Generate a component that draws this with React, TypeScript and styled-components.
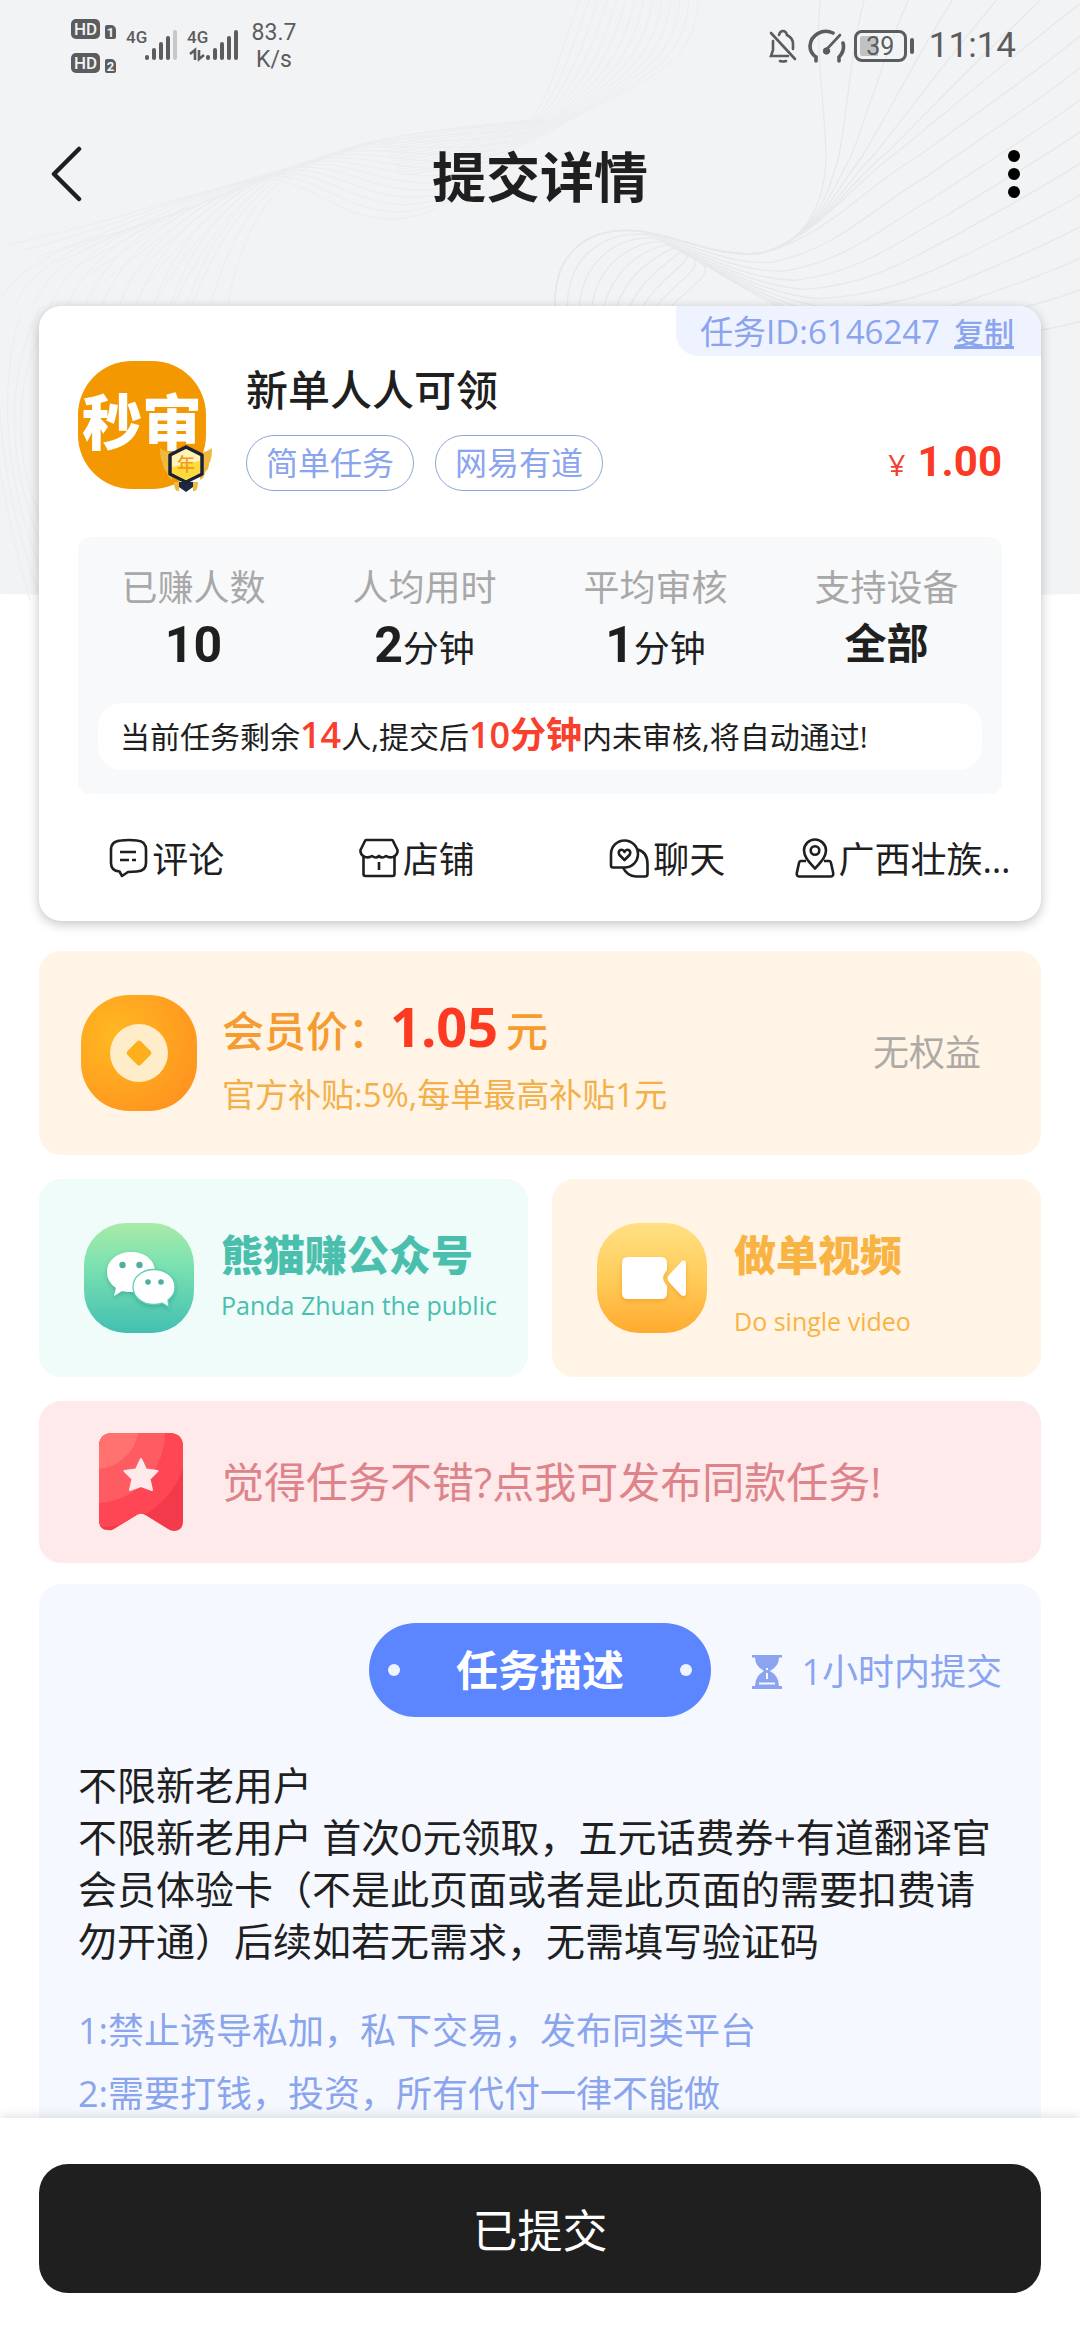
import React from "react";
import styled, { createGlobalStyle } from "styled-components";

const GlobalStyle = createGlobalStyle`
  * { box-sizing: border-box; }
  body {
    margin: 0;
    background: #ffffff;
    color: #1f1f1f;
    font-family: "Open Sans", "Noto Sans CJK SC", sans-serif;
  }
  button {
    margin: 0;
    padding: 0;
    border: 0;
    background: none;
    color: inherit;
    font: inherit;
    text-align: left;
    cursor: pointer;
  }
  svg { display: block; flex: none; }
`;

/* ---------- page frame ---------- */

const Screen = styled.div`
  position: relative;
  height: 100vh;
  display: flex;
  flex-direction: column;
  overflow: hidden;
`;

const Backdrop = styled.svg`
  position: absolute;
  top: 0;
  left: 0;
  width: 100%;
  height: 600px;
`;

const StatusBar = styled.div`
  position: relative;
  height: 90px;
  flex: none;
  display: flex;
  justify-content: space-between;
  align-items: flex-start;
  padding: 0 64px 0 71px;
  color: #5c5c5e;
  font-family: Roboto, sans-serif;
`;

const StatusLeft = styled.div`
  display: flex;
  padding-top: 19px;
`;

const StatusRight = styled.div`
  display: flex;
  align-items: center;
  height: 92px;
`;

const HdStack = styled.div`
  display: grid;
  gap: 14px;
  margin-right: 10px;
`;

const HdRow = styled.div`
  display: flex;
  align-items: flex-end;
  gap: 5px;
  height: 20px;
`;

const HdChip = styled.span`
  width: 29px;
  height: 20px;
  border-radius: 5px;
  background: #5c5c5e;
  color: #f2f3f5;
  font-size: 17px;
  font-weight: 500;
  line-height: 20px;
  text-align: center;
`;

const SimChip = styled.span`
  width: 11px;
  height: 14px;
  border-radius: 2px 5px 2px 2px;
  background: #5c5c5e;
  color: #f2f3f5;
  font-size: 13px;
  font-weight: 700;
  line-height: 15px;
  text-align: center;
`;

const Signal = styled.div`
  display: flex;
  align-items: flex-start;
  width: 61px;
  padding-top: 9px;
`;

const NetKind = styled.div`
  width: 19px;
  font-size: 17px;
  font-weight: 500;
  line-height: 18px;
`;

const Speed = styled.div`
  width: 52px;
  font-size: 23px;
  line-height: 27px;
  text-align: center;
`;

const BellBox = styled.div`
  margin-right: 11px;
`;

const Battery = styled.div`
  display: flex;
  align-items: center;
  gap: 3px;
  margin: 0 15px 0 8px;
  &::after {
    content: "";
    width: 4px;
    height: 16px;
    border-radius: 2px;
    background: #5c5c5e;
  }
`;

const BatteryCell = styled.span`
  width: 53px;
  height: 32px;
  border: 3px solid #5c5c5e;
  border-radius: 8px;
  background: linear-gradient(90deg, #c0c1c3 18px, transparent 18px) content-box;
  padding: 3px;
  font-size: 25px;
  line-height: 21px;
  text-align: center;
`;

const Clock = styled.span`
  font-size: 35px;
  line-height: 40px;
`;

const NavBar = styled.header`
  position: relative;
  flex: none;
  height: 174px;
  display: grid;
  grid-template-columns: 1fr auto 1fr;
  align-items: center;
  padding: 0 42px;
`;

const PageTitle = styled.h1`
  margin: 0;
  font-size: 54px;
  font-weight: 700;
  line-height: 72px;
`;

const NavButton = styled.button<{ $end?: boolean }>`
  width: 48px;
  height: 72px;
  margin-bottom: 6px;
  display: grid;
  place-items: center;
  justify-self: ${(p) => (p.$end ? "end" : "start")};
`;

const Content = styled.main`
  position: relative;
  flex: 1;
  min-height: 0;
  overflow-y: auto;
  scrollbar-width: none;
  display: flex;
  flex-direction: column;
  padding: 42px 39px 0;
`;

/* ---------- task summary ---------- */

const TaskCard = styled.section`
  position: relative;
  flex: none;
  border-radius: 22px;
  background: #ffffff;
  box-shadow: 0 3px 12px rgba(0, 0, 0, 0.24);
`;

const IdTab = styled.div`
  position: absolute;
  top: 0;
  right: 0;
  height: 50px;
  display: flex;
  align-items: baseline;
  gap: 14px;
  padding: 0 27px 0 24px;
  border-radius: 0 22px 0 22px;
  background: #eef3ff;
  color: #8aa4ee;
  font-size: 33px;
  line-height: 52px;
`;

const CopyButton = styled.button`
  font-size: 30px;
  font-weight: 500;
  line-height: 50px;
  text-decoration: underline;
`;

const TaskBody = styled.div`
  padding: 55px 39px 0;
`;

const Profile = styled.div`
  display: flex;
  gap: 40px;
`;

const Avatar = styled.div`
  position: relative;
  flex: none;
  width: 128px;
  height: 128px;
  border-radius: 54px;
  background: #f39800;
  color: #ffffff;
  font-family: "Noto Sans CJK SC", sans-serif;
  font-size: 60px;
  font-weight: 900;
  line-height: 116px;
  text-align: center;
  white-space: nowrap;
`;

const YearBadge = styled.svg`
  position: absolute;
  right: -7px;
  bottom: -3px;
`;

const ProfileText = styled.div`
  flex: 1;
  min-width: 0;
  padding-top: 5px;
`;

const TaskName = styled.h2`
  margin: 0 0 21px;
  font-size: 42px;
  font-weight: 500;
  line-height: 48px;
`;

const TagRow = styled.div`
  display: flex;
  align-items: center;
  gap: 21px;
  height: 56px;
`;

const Tag = styled.span`
  height: 56px;
  padding: 0 19px;
  border: 1px solid #8fa3d8;
  border-radius: 28px;
  color: #8aa4ee;
  font-size: 32px;
  line-height: 54px;
`;

const Price = styled.span`
  display: flex;
  align-items: baseline;
  gap: 12px;
  margin-left: auto;
  color: #ef4130;
  font-size: 30px;
  line-height: 56px;
`;

const PriceValue = styled.strong`
  color: #fa3a23;
  font-family: Roboto, sans-serif;
  font-size: 42px;
  font-weight: 700;
`;

const Stats = styled.div`
  margin-top: 46px;
  padding: 30px 20px 24px;
  border-radius: 12px;
  background: #f8f9fb;
`;

const StatGrid = styled.dl`
  display: grid;
  grid-template-columns: repeat(4, 1fr);
  margin: 0 -20px 30px;
  text-align: center;
`;

const StatLabel = styled.dt`
  color: #a8a8a8;
  font-size: 36px;
  line-height: 42px;
`;

const StatValue = styled.dd`
  margin: 8px 0 0;
  height: 56px;
  font-size: 36px;
  line-height: 56px;
`;

const StatNumber = styled.strong<{ $word?: boolean }>`
  font-family: Roboto, "Noto Sans CJK SC", sans-serif;
  font-size: ${(p) => (p.$word ? 42 : 50)}px;
  font-weight: 700;
  line-height: 56px;
`;

const Notice = styled.p`
  margin: 0;
  height: 67px;
  padding: 0 22px;
  border-radius: 24px;
  background: #ffffff;
  font-size: 30px;
  line-height: 67px;
  white-space: nowrap;
`;

const Hot = styled.strong`
  color: #f9402c;
  font-size: 36px;
  font-weight: 600;
  line-height: 60px;
`;

const Actions = styled.nav`
  display: grid;
  grid-template-columns: repeat(4, minmax(0, 1fr));
  height: 127px;
`;

const Action = styled.button<{ $long?: boolean }>`
  min-width: 0;
  display: flex;
  align-items: center;
  justify-content: center;
  gap: 4px;
  padding: ${(p) => (p.$long ? "0 20px 0 4px" : "0 0 0 4px")};
`;

const ActionLabel = styled.span`
  min-width: 0;
  overflow: hidden;
  text-overflow: ellipsis;
  white-space: nowrap;
  padding-top: 4px;
  font-size: 36px;
  line-height: 48px;
`;

/* ---------- coloured banners ---------- */

const Banner = styled.button<{ $bg: string; $height: number; $top?: number; $left: number; $right?: number }>`
  flex: none;
  min-width: 0;
  min-height: ${(p) => p.$height}px;
  margin-top: ${(p) => p.$top ?? 0}px;
  padding: 0 ${(p) => p.$right ?? 42}px 0 ${(p) => p.$left}px;
  display: flex;
  align-items: center;
  border-radius: 22px;
  background: ${(p) => p.$bg};
`;

const MemberText = styled.div`
  flex: 1;
  margin-left: 25px;
  padding-top: 6px;
`;

const MemberPrice = styled.div`
  display: flex;
  align-items: baseline;
  color: #f69b2f;
  font-size: 42px;
  font-weight: 500;
  line-height: 60px;
`;

const MemberAmount = styled.strong`
  margin-right: 8px;
  color: #fc3a22;
  font-size: 54px;
  font-weight: 700;
`;

const MemberNote = styled.div`
  margin-top: 12px;
  color: #f3b04a;
  font-size: 33px;
  line-height: 44px;
`;

const NoBenefit = styled.span`
  padding-right: 18px;
  color: #adaaa6;
  font-size: 36px;
  line-height: 48px;
`;

const Pair = styled.div`
  flex: none;
  display: grid;
  grid-template-columns: repeat(2, minmax(0, 1fr));
  gap: 24px;
  margin-top: 24px;
`;

const PairText = styled.div<{ $color: string; $gap: number }>`
  display: grid;
  gap: ${(p) => p.$gap}px;
  align-self: start;
  margin-left: 27px;
  padding-top: 49px;
  color: ${(p) => p.$color};
  white-space: nowrap;
`;

const PairTitle = styled.strong`
  font-size: 42px;
  font-weight: 800;
  line-height: 54px;
`;

const PairNote = styled.span`
  font-size: 25px;
  line-height: 36px;
`;

const PromoText = styled.span`
  margin-left: 39px;
  color: #dd8389;
  font-size: 42px;
  line-height: 56px;
`;

/* ---------- description ---------- */

const Description = styled.section`
  flex: none;
  margin-top: 21px;
  padding: 39px 39px 60px;
  border-radius: 22px 22px 0 0;
  background: #f5f8fe;
`;

const DescriptionHead = styled.div`
  display: grid;
  grid-template-columns: 1fr 342px 1fr;
  align-items: center;
`;

const Pill = styled.h2`
  grid-column: 2;
  margin: 0;
  height: 94px;
  padding: 0 19px;
  display: flex;
  align-items: center;
  justify-content: space-between;
  border-radius: 47px;
  background: #5c86ff;
  color: #ffffff;
  font-size: 42px;
  font-weight: 700;
  line-height: 56px;
  &::before,
  &::after {
    content: "";
    width: 12px;
    height: 12px;
    border-radius: 50%;
    background: #eef3ff;
  }
`;

const Deadline = styled.div`
  justify-self: end;
  display: flex;
  align-items: center;
  gap: 19px;
  padding-top: 4px;
  color: #8ba4f0;
  font-size: 36px;
  line-height: 48px;
  white-space: nowrap;
`;

const Details = styled.p`
  margin: 42px 0 0;
  font-size: 39px;
  line-height: 52px;
  white-space: pre-line;
`;

const Rules = styled.ol`
  margin: 32px 0 0;
  padding: 0;
  list-style: none;
  color: #8aa4ee;
  font-size: 36px;
  line-height: 63px;
`;

/* ---------- footer ---------- */

const Footer = styled.footer`
  position: relative;
  flex: none;
  padding: 46px 39px 47px;
  background: #ffffff;
  box-shadow: 0 -2px 10px rgba(0, 0, 0, 0.12);
`;

const SubmitButton = styled.button`
  width: 100%;
  height: 129px;
  border-radius: 29px;
  background: #1f1f1f;
  color: #ffffff;
  font-size: 45px;
  text-align: center;
`;

/* ---------- drawings ---------- */

type Pt = [number, number];

const blend = (a: Pt[], b: Pt[], t: number) => {
  const p = a.map(([x, y], i) => {
    const bx = x + (b[i][0] - x) * t;
    const by = y + (b[i][1] - y) * t;
    return `${bx.toFixed(1)} ${by.toFixed(1)}`;
  });
  let d = `M${p[0]}`;
  for (let i = 1; i + 2 < p.length; i += 3) d += ` C${p[i]} ${p[i + 1]} ${p[i + 2]}`;
  return d;
};

const family = (a: Pt[], b: Pt[], n: number) =>
  Array.from({ length: n }, (_, i) => blend(a, b, i / (n - 1)));

const faintLines = [
  ...family(
    [[5, 245], [120, 222], [190, 190], [260, 180], [320, 172], [360, 260], [460, 195]],
    [[225, 320], [240, 230], [270, 165], [370, 142], [430, 130], [480, 126], [545, 121]],
    14
  ),
  ...family(
    [[0, 300], [15, 270], [60, 245], [120, 232], [180, 215], [220, 195], [260, 178]],
    [[180, 330], [195, 270], [220, 220], [270, 180], [300, 160], [340, 150], [390, 138]],
    12
  ),
  ...family(
    [[400, 175], [470, 168], [520, 150], [570, 120], [640, 80], [695, 70], [698, 0]],
    [[380, 140], [450, 126], [500, 124], [530, 120], [550, 100], [560, 50], [580, 0]],
    14
  ),
];

const loopStart: Pt[] = [[556, 320], [548, 250], [590, 226], [640, 231], [690, 240], [720, 258], [762, 253]];
const loopEnd: Pt[] = [[660, 320], [680, 290], [720, 275], [700, 262], [740, 285], [790, 320], [860, 335]];

const strongLines = [
  ...family(
    [...loopStart, [815, 240], [825, 190], [826, 160], [826, 110], [815, 60], [820, 0]],
    [...loopStart, [820, 235], [850, 185], [900, 150], [960, 100], [1020, 50], [1085, 0]],
    7
  ),
  ...family(
    [...loopStart, [830, 235], [860, 190], [920, 155], [980, 110], [1040, 70], [1085, 32]],
    [...loopEnd, [930, 345], [980, 340], [1000, 336], [1030, 332], [1060, 328], [1085, 320]],
    10
  ),
];

const sideLines = family(
  [[-20, 330], [-10, 400], [0, 500], [30, 600]],
  [[60, 300], [5, 380], [10, 470], [60, 560]],
  5
);

const HeaderArt = () => (
  <Backdrop viewBox="0 0 1080 600" preserveAspectRatio="none" aria-hidden="true">
    <path d="M0 0H1080V594Q540 604 0 594Z" fill="#f2f3f5" />
    <g fill="none" strokeWidth="1">
      {[...faintLines, ...sideLines].map((d) => (
        <path key={d} d={d} stroke="#ecedef" />
      ))}
      {strongLines.map((d) => (
        <path key={d} d={d} stroke="#e6e8ea" strokeWidth="1.3" />
      ))}
    </g>
  </Backdrop>
);

const Bars = ({ weak, arrows }: { weak?: boolean; arrows?: boolean }) => (
  <svg width="36" height="34" viewBox="0 0 36 34" aria-hidden="true" overflow="visible">
    {[5, 12, 18, 24, 30].map((h, i) => (
      <rect key={h} x={i * 7} y={32 - h} width="4" height={h} rx="2" fill={weak && i === 4 ? "#c6c7c9" : "#5c5c5e"} />
    ))}
    {arrows && <path d="M-16 26L-11 22V32M-7 22V31L-2 27" fill="none" stroke="#5c5c5e" strokeWidth="2.6" />}
  </svg>
);

const MutedBell = () => (
  <svg width="28" height="34" viewBox="0 0 28 34" fill="none" stroke="#5c5c5e" strokeWidth="2.6" strokeLinecap="round" aria-hidden="true">
    <path d="M2 4L26 30M4 12V21L2 27H19M10 6Q11 2 14 2T18 6Q24 9 24 15V20" />
    <path d="M11 32Q14 33 17 32" />
  </svg>
);

const Gauge = () => (
  <svg width="38" height="34" viewBox="0 0 38 34" fill="none" stroke="#5c5c5e" strokeWidth="3.6" strokeLinecap="round" aria-hidden="true">
    <path d="M8 32V28Q2 24 2 17A16 16 0 0 1 25 4M35 14Q37 22 31 28V32" />
    <path d="M32 6L19 20" strokeWidth="2.6" />
    <circle cx="18.500" cy="22" r="3.200" fill="#5c5c5e" strokeWidth="1" />
  </svg>
);

const BackIcon = () => (
  <svg width="32" height="58" viewBox="0 0 32 58" fill="none" stroke="#1f1f1f" strokeWidth="4.5" strokeLinecap="round" strokeLinejoin="round" aria-hidden="true">
    <path d="M29 4L4 29L29 54" />
  </svg>
);

const MoreIcon = () => (
  <svg width="12" height="54" viewBox="0 0 12 54" aria-hidden="true">
    {[9, 27, 45].map((y) => (
      <circle key={y} cx="6" cy={y} r="6" />
    ))}
  </svg>
);

const YearBadgeArt = () => (
  <YearBadge width="54" height="48" viewBox="0 0 54 48" aria-hidden="true">
    <path d="M1 4Q6 8 13 9V36Q8 33 8 28Q4 25 4 20Q1 15 1 4ZM53 4Q48 8 41 9V36Q46 33 46 28Q50 25 50 20Q53 15 53 4Z" fill="#f0b93e" />
    <path d="M15 38H20V47H18Q15 45 15 38ZM39 38H34V47H36Q39 45 39 38Z" fill="#f0b93e" />
    <path d="M20 38H34V43L27 48L20 43Z" fill="#1c2740" />
    <path d="M27 3L43 11V30L27 38L11 30V11Z" fill="#fff3b8" stroke="#1b2234" strokeWidth="3.5" strokeLinejoin="round" />
    <path d="M13 23L41 17V29L27 36L13 29Z" fill="#ffda3c" />
    <text x="27" y="27" textAnchor="middle" fontSize="18" fontWeight="500" fill="#f19a1c" fontFamily="Noto Sans CJK SC, sans-serif">年</text>
  </YearBadge>
);

const LineIcon = ({ children }: { children: React.ReactNode }) => (
  <svg width="40" height="40" viewBox="0 0 40 40" fill="none" stroke="#1f1f1f" strokeWidth="2.6" strokeLinejoin="round" aria-hidden="true">
    {children}
  </svg>
);

const CommentIcon = () => (
  <LineIcon>
    <path d="M13 2.500Q21 1.500 29 2.500Q38 3 38 12V25Q38 33 29 33.500L20 34L14 38L11.500 33.500Q3 33 3 25V12Q3 3 13 2.500Z" />
    <path d="M12 14H28M12 22H21M24 22H28" />
  </LineIcon>
);

const ShopIcon = () => (
  <LineIcon>
    <path d="M7 2H33Q34 2 34.500 4L38.500 12Q39 17 34 19Q30 20 27 18Q23 21 20 18Q17 21 13 18Q10 20 6 19Q1 17 1.500 12L5.500 4Q6 2 7 2Z" />
    <path d="M4.500 19V36Q4.500 38 6.500 38H33.500Q35.500 38 35.500 36V19M20 24V32" />
  </LineIcon>
);

const ChatIcon = () => (
  <LineIcon>
    <path d="M4 29.500Q2 29.500 2 27.500V16A13.500 13.500 0 1 1 15.500 29.500Z" />
    <path d="M28.500 11.500Q38.500 14 38.500 26V36Q38.500 38.500 36 38.500H27Q18 38 14 29.500" />
    <path d="M15.500 22L10.500 17Q8.500 13.500 11.500 12Q14 11 15.500 14Q17 11 19.500 12Q22.500 13.500 20.500 17Z" />
  </LineIcon>
);

const PinIcon = () => (
  <LineIcon>
    <path d="M20 30.500C14 24 9 19 9 12.500A11 11 0 0 1 31 12.500C31 19 26 24 20 30.500Z" />
    <circle cx="20" cy="12.500" r="4.300" />
    <path d="M11 23H6Q4.500 23 4 25L1.800 35Q1.500 38.500 4 38.500H36Q38.500 38.500 38.200 35L36 25Q35.500 23 34 23H29" />
  </LineIcon>
);

const CoinIcon = () => (
  <svg width="116" height="116" viewBox="0 0 116 116" aria-hidden="true">
    <defs>
      <radialGradient id="coin" cx="0.300" cy="0.350" r="0.850">
        <stop offset="0" stopColor="#ffb821" />
        <stop offset="1" stopColor="#ff911f" />
      </radialGradient>
    </defs>
    <rect width="116" height="116" rx="48" fill="url(#coin)" />
    <circle cx="58" cy="58" r="29" fill="#ffecc8" />
    <rect x="48.500" y="48.500" width="19" height="19" rx="2.500" transform="rotate(45 58 58)" fill="#ffae1c" />
  </svg>
);

const WechatIcon = () => (
  <svg width="110" height="110" viewBox="0 0 110 110" aria-hidden="true">
    <defs>
      <linearGradient id="wechat" x1="0" y1="0" x2="0" y2="1">
        <stop offset="0" stopColor="#a9eaa8" />
        <stop offset="0.350" stopColor="#7fe3b0" />
        <stop offset="1" stopColor="#43bfb2" />
      </linearGradient>
      <filter id="softGreen" x="-20%" y="-20%" width="140%" height="150%">
        <feDropShadow dx="0" dy="2" stdDeviation="2" floodColor="#1f8f86" floodOpacity="0.5" />
      </filter>
    </defs>
    <rect width="110" height="110" rx="42" fill="url(#wechat)" />
    <g filter="url(#softGreen)" fill="#ffffff">
      <path d="M47 29C61 29 71 37 71 49S60 69 47 69Q42 69 38 68L30 73L32 65Q23 59 23 49C23 37 34 29 47 29Z" />
      <path d="M70 46.500C82 46.500 91 54 91 64Q91 72 84 77L85 84L78 80Q74 81.500 70 81.500C58 81.500 49 74 49 64S58 46.500 70 46.500Z" stroke="#5ecfb0" strokeWidth="1.300" />
    </g>
    <g fill="#4fae9f">
      <circle cx="38.500" cy="42" r="3.200" />
      <circle cx="55.500" cy="42" r="3.200" />
      <circle cx="64" cy="59" r="2.800" />
      <circle cx="77" cy="59" r="2.800" />
    </g>
  </svg>
);

const VideoIcon = () => (
  <svg width="110" height="110" viewBox="0 0 110 110" aria-hidden="true">
    <defs>
      <linearGradient id="video" x1="0" y1="0" x2="0" y2="1">
        <stop offset="0" stopColor="#ffe083" />
        <stop offset="0.500" stopColor="#ffcc5a" />
        <stop offset="1" stopColor="#ffaa30" />
      </linearGradient>
      <filter id="softAmber" x="-20%" y="-20%" width="140%" height="150%">
        <feDropShadow dx="0" dy="2" stdDeviation="2" floodColor="#ee8a12" floodOpacity="0.5" />
      </filter>
    </defs>
    <rect width="110" height="110" rx="42" fill="url(#video)" />
    <g filter="url(#softAmber)" fill="#ffffff">
      <path d="M31 34H64Q70 34 70 40V47Q66 52 66 55T70 63V70Q70 76 64 76H31Q25 76 25 70V40Q25 34 31 34Z" />
      <path d="M85 38Q89 36 89 41V69Q89 75 84 72L72 59Q69 55 72 52Z" />
    </g>
  </svg>
);

const RibbonIcon = () => (
  <svg width="84" height="98" viewBox="0 0 84 98" aria-hidden="true">
    <defs>
      <clipPath id="ribbon">
        <path d="M14 0H70Q84 0 84 14V88Q84 98 75 98Q72 98 69 96L48 83Q42 78 36 83L15 96Q12 98 9 97Q0 97 0 87V14Q0 0 14 0Z" />
      </clipPath>
    </defs>
    <g clipPath="url(#ribbon)">
      <rect width="84" height="98" fill="#f23a4b" />
      <ellipse cx="0" cy="10" rx="88" ry="84" fill="#ff4655" />
      <circle cx="-4" cy="0" r="70" fill="#ff5b63" />
      <circle cx="-4" cy="-8" r="44" fill="#ff726f" />
    </g>
    <path d="M42 26L47 36.500L58.500 38L50.500 46L53 57L42 53L31 57L33.500 46L25.500 38L37 36.500Z" fill="#feeaeb" stroke="#feeaeb" strokeWidth="2" strokeLinejoin="round" />
  </svg>
);

const HourglassIcon = () => (
  <svg width="30" height="34" viewBox="0 0 30 34" aria-hidden="true">
    <path d="M0 0H30V2.500H27Q27 11 18 16Q27 21 27 31H30V34H0V31H3Q3 21 12 16Q3 11 3 2.500H0Z" fill="#8ba4f0" />
    <path d="M15 13V15M15 18V24" stroke="#f4f8ff" strokeWidth="2" />
    <path d="M7 28.500H23" stroke="#f4f8ff" strokeWidth="2" />
  </svg>
);

/* ---------- data ---------- */

const stats = [
  { label: "已赚人数", value: "10", unit: "" },
  { label: "人均用时", value: "2", unit: "分钟" },
  { label: "平均审核", value: "1", unit: "分钟" },
  { label: "支持设备", value: "全部", unit: "", word: true },
];

const actions = [
  { label: "评论", icon: <CommentIcon /> },
  { label: "店铺", icon: <ShopIcon /> },
  { label: "聊天", icon: <ChatIcon /> },
  { label: "广西壮族自治区", icon: <PinIcon />, long: true },
];

const details =
  "不限新老用户\n不限新老用户 首次0元领取，五元话费券+有道翻译官会员体验卡（不是此页面或者是此页面的需要扣费请勿开通）后续如若无需求，无需填写验证码";

const rules = ["1:禁止诱导私加，私下交易，发布同类平台", "2:需要打钱，投资，所有代付一律不能做"];

export default function App() {
  return (
    <Screen lang="zh-CN">
      <GlobalStyle />
      <HeaderArt />
      <StatusBar>
        <StatusLeft>
          <HdStack>
            {["1", "2"].map((n) => (
              <HdRow key={n}>
                <HdChip>HD</HdChip>
                <SimChip>{n}</SimChip>
              </HdRow>
            ))}
          </HdStack>
          <Signal>
            <NetKind>4G</NetKind>
            <Bars weak />
          </Signal>
          <Signal>
            <NetKind>4G</NetKind>
            <Bars arrows />
          </Signal>
          <Speed>
            83.7
            <br />
            K/s
          </Speed>
        </StatusLeft>
        <StatusRight>
          <BellBox>
            <MutedBell />
          </BellBox>
          <Gauge />
          <Battery>
            <BatteryCell>39</BatteryCell>
          </Battery>
          <Clock>11:14</Clock>
        </StatusRight>
      </StatusBar>
      <NavBar>
        <NavButton aria-label="返回">
          <BackIcon />
        </NavButton>
        <PageTitle>提交详情</PageTitle>
        <NavButton $end aria-label="更多">
          <MoreIcon />
        </NavButton>
      </NavBar>

      <Content>
        <TaskCard>
          <IdTab>
            <span>任务ID:6146247</span>
            <CopyButton>复制</CopyButton>
          </IdTab>
          <TaskBody>
            <Profile>
              <Avatar>
                秒审
                <YearBadgeArt />
              </Avatar>
              <ProfileText>
                <TaskName>新单人人可领</TaskName>
                <TagRow>
                  <Tag>简单任务</Tag>
                  <Tag>网易有道</Tag>
                  <Price>
                    ¥<PriceValue>1.00</PriceValue>
                  </Price>
                </TagRow>
              </ProfileText>
            </Profile>
            <Stats>
              <StatGrid>
                {stats.map((s) => (
                  <div key={s.label}>
                    <StatLabel>{s.label}</StatLabel>
                    <StatValue>
                      <StatNumber $word={s.word}>{s.value}</StatNumber>
                      {s.unit}
                    </StatValue>
                  </div>
                ))}
              </StatGrid>
              <Notice>
                当前任务剩余<Hot>14</Hot>人,提交后<Hot>10分钟</Hot>内未审核,将自动通过!
              </Notice>
            </Stats>
          </TaskBody>
          <Actions>
            {actions.map((a) => (
              <Action key={a.label} $long={a.long}>
                {a.icon}
                <ActionLabel>{a.label}</ActionLabel>
              </Action>
            ))}
          </Actions>
        </TaskCard>

        <Banner $bg="#fff4e5" $height={204} $top={30} $left={42}>
          <CoinIcon />
          <MemberText>
            <MemberPrice>
              会员价：<MemberAmount>1.05</MemberAmount>元
            </MemberPrice>
            <MemberNote>官方补贴:5%,每单最高补贴1元</MemberNote>
          </MemberText>
          <NoBenefit>无权益</NoBenefit>
        </Banner>

        <Pair>
          <Banner $bg="#effcf9" $height={198} $left={45} $right={20}>
            <WechatIcon />
            <PairText $color="#4bbfae" $gap={5}>
              <PairTitle>熊猫赚公众号</PairTitle>
              <PairNote>Panda Zhuan the public</PairNote>
            </PairText>
          </Banner>
          <Banner $bg="#fff4e5" $height={198} $left={45} $right={20}>
            <VideoIcon />
            <PairText $color="#f9b342" $gap={21}>
              <PairTitle>做单视频</PairTitle>
              <PairNote>Do single video</PairNote>
            </PairText>
          </Banner>
        </Pair>

        <Banner $bg="#feeaeb" $height={162} $top={24} $left={60}>
          <RibbonIcon />
          <PromoText>觉得任务不错?点我可发布同款任务!</PromoText>
        </Banner>

        <Description>
          <DescriptionHead>
            <Pill>任务描述</Pill>
            <Deadline>
              <HourglassIcon />
              1小时内提交
            </Deadline>
          </DescriptionHead>
          <Details>{details}</Details>
          <Rules>
            {rules.map((r) => (
              <li key={r}>{r}</li>
            ))}
          </Rules>
        </Description>
      </Content>

      <Footer>
        <SubmitButton>已提交</SubmitButton>
      </Footer>
    </Screen>
  );
}
